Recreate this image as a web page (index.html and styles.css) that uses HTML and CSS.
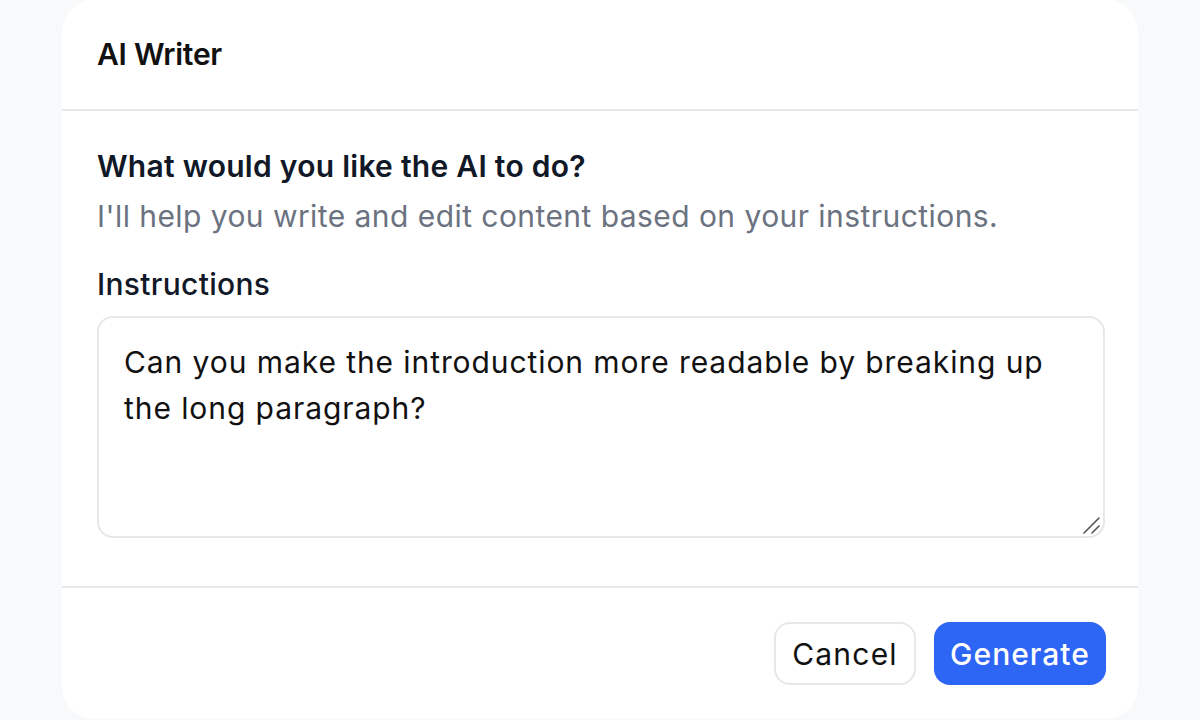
FILE: index.html
```html
<!DOCTYPE html>
<html lang="en">
<head>
<meta charset="utf-8">
<title>AI Writer</title>
<link rel="stylesheet" href="styles.css">
</head>
<body>
<div class="card">
  <header class="card-header">
    <h1 class="title">AI Writer</h1>
  </header>
  <section class="card-body">
    <h2 class="question">What would you like the AI to do?</h2>
    <p class="hint">I'll help you write and edit content based on your instructions.</p>
    <label class="label">Instructions</label>
    <div class="textarea">
      <div class="textarea-text">Can you make the introduction more readable by breaking up the long paragraph?</div>
      <svg class="grip" width="18" height="18" viewBox="0 0 18 18"><path d="M2 17 L17 2 M10 17 L17 10" stroke="#555" stroke-width="1.6" stroke-linecap="round" fill="none"/></svg>
    </div>
  </section>
  <footer class="card-footer">
    <button class="btn btn-secondary">Cancel</button>
    <button class="btn btn-primary">Generate</button>
  </footer>
</div>
</body>
</html>
```

FILE: styles.css
```css
* { box-sizing: border-box; }
html, body { margin: 0; padding: 0; }
body {
  background: #f8f9fb;
  font-family: "Inter", "Noto Sans", sans-serif;
  color: #111827;
  width: 1200px;
  height: 720px;
  overflow: hidden;
}
.card {
  margin: 0 62px;
  height: 719px;
  background: #ffffff;
  border-radius: 32px;
  display: flex;
  flex-direction: column;
}
.card-header {
  height: 111px;
  border-bottom: 2px solid #e5e7eb;
  display: flex;
  align-items: center;
  padding: 0 35px 2px;
}
.title {
  margin: 0;
  font-size: 30px;
  font-weight: 600;
  line-height: 40px;
  letter-spacing: -0.25px;
  color: #111111;
}
.card-body {
  padding: 30px 33px 48px 35px;
  border-bottom: 2px solid #e5e7eb;
  display: flex;
  flex-direction: column;
}
.question {
  margin: 0;
  font-size: 30px;
  font-weight: 600;
  line-height: 50px;
  letter-spacing: 0.27px;
  color: #111827;
}
.hint {
  margin: 0;
  font-size: 30px;
  font-weight: 400;
  line-height: 50px;
  letter-spacing: 0.44px;
  color: #6b7280;
}
.label {
  margin-top: 18px;
  margin-bottom: 7px;
  font-size: 30px;
  font-weight: 500;
  line-height: 50px;
  letter-spacing: 0.3px;
  color: #111827;
}
.textarea {
  position: relative;
  height: 222px;
  border: 2px solid #e5e7eb;
  border-radius: 16px;
  padding: 21px 25px;
}
.textarea-text {
  font-size: 30px;
  line-height: 46px;
  letter-spacing: 0.92px;
  color: #111111;
}
.grip {
  position: absolute;
  right: 3px;
  bottom: 2px;
}
.card-footer {
  flex: 1;
  display: flex;
  justify-content: flex-end;
  align-items: flex-start;
  gap: 18px;
  padding: 34px 32px 0 0;
}
.btn {
  height: 63px;
  border-radius: 16px;
  font-family: inherit;
  font-size: 30px;
  cursor: pointer;
}
.btn-secondary {
  width: 142px;
  background: #ffffff;
  border: 2px solid #e5e7eb;
  color: #111111;
  font-weight: 400;
  letter-spacing: 1.2px;
  padding: 0;
}
.btn-primary {
  width: 172px;
  background: #2d65f5;
  border: none;
  color: #ffffff;
  font-weight: 500;
  letter-spacing: 1px;
  padding: 0;
}
```
